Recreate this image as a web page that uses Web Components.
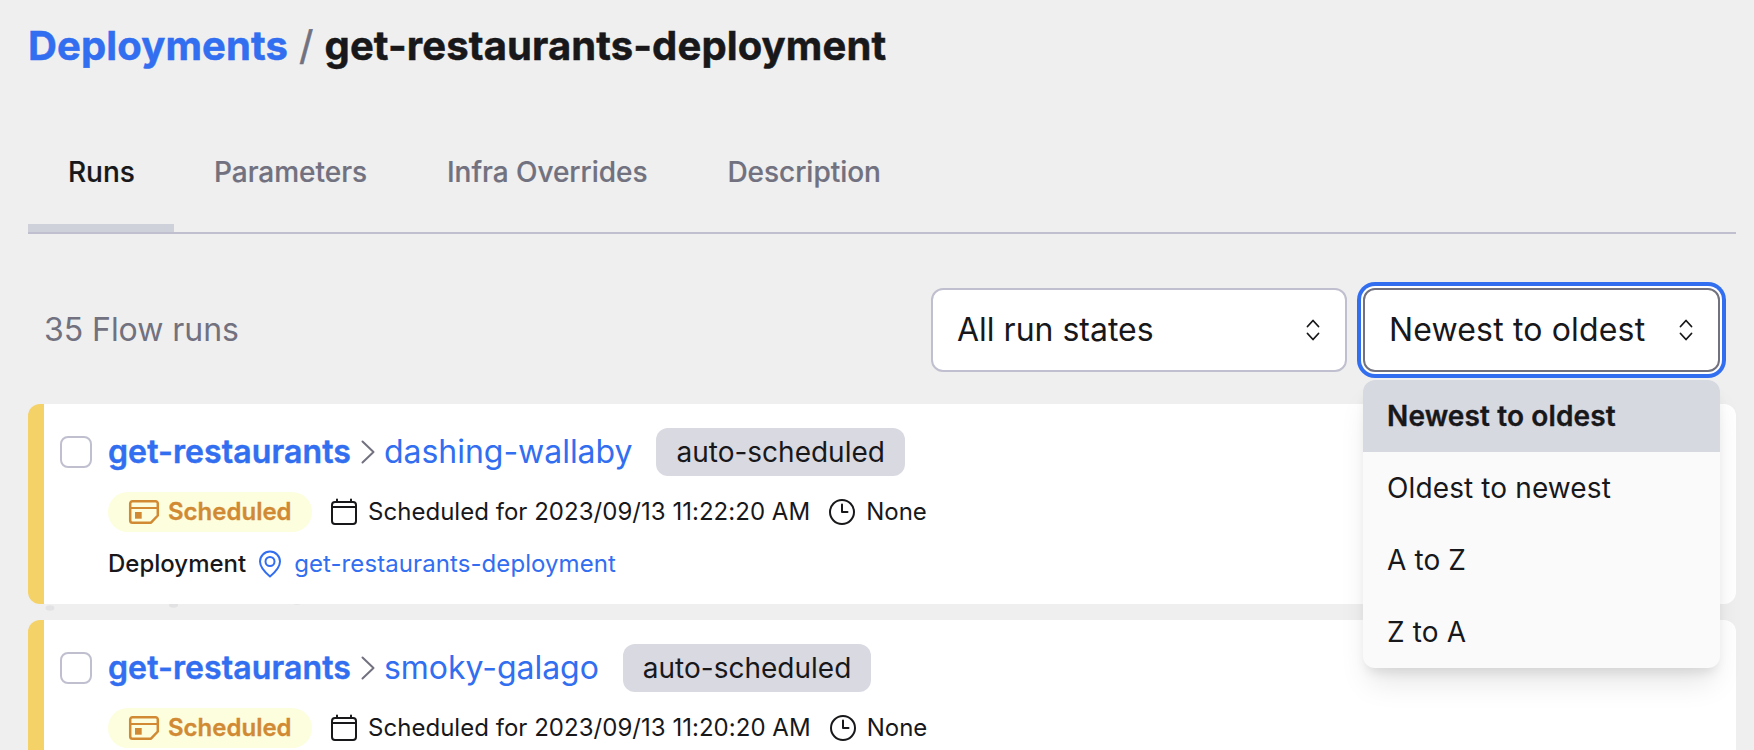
<!DOCTYPE html>
<html lang="en">
<head>
<meta charset="utf-8">
<title>get-restaurants-deployment</title>
<style>
html,body{margin:0;height:100%;overflow:hidden;background:#efefef}
body{font-family:Inter,"Liberation Sans",sans-serif;color:#18181b}
</style>
</head>
<body>
<deployment-page></deployment-page>
<script>
const define = (name, html) => customElements.define(name, class extends HTMLElement {
  connectedCallback() {
    if (this.shadowRoot) return;
    const root = this.attachShadow({mode: 'open'});
    const t = document.createElement('template');
    t.innerHTML = html;
    root.append(t.content.cloneNode(true));
  }
});

define('page-heading', `<style>
:host{display:flex;align-items:center;height:56px;font-size:40px;line-height:56px;font-weight:700;white-space:pre;letter-spacing:.12px}
span{-webkit-text-stroke:.5px currentColor}
.c{color:#326ef0}.s{color:#71717f;font-weight:400;margin:0 11px 0 11px}
</style><span class="c"><slot name="parent"></slot></span><span class="s">/</span><span><slot></slot></span>`);

define('tab-item', `<style>
:host{display:block;box-sizing:border-box;height:120px;padding:40px 40px 0;font-size:28px;line-height:40px;font-weight:500;letter-spacing:-.03px;color:#71717f;white-space:nowrap;border-bottom:8px solid transparent;-webkit-text-stroke:.2px currentColor}
:host([active]){color:#18181b;border-color:#ced1da;width:146px}
</style><slot></slot>`);

define('tab-bar', `<style>
:host{display:flex;border-bottom:2px solid #c0bfcf}
</style><slot></slot>`);

define('select-box', `<style>
:host{display:block;position:relative}
.b{box-sizing:border-box;height:84px;border:2px solid #c0bfcf;border-radius:12px;background:#fff;padding:0 25px 0 24px;display:flex;align-items:center;justify-content:space-between;font-size:32px;white-space:nowrap}
.b span{padding-bottom:2px}
:host([open]) .b{border-color:#71717f;box-shadow:0 0 0 2px #fff,0 0 0 6px #326ef0;letter-spacing:.16px}
svg{display:block;fill:none;stroke:#18181b;stroke-width:1.8;stroke-linecap:round;stroke-linejoin:round}
</style><div class="b"><span><slot></slot></span><svg width="14" height="22"><path d="M1.5 7.5 7 1.5l5.5 6M1.5 14.5l5.5 6 5.5-6"/></svg></div><slot name="menu"></slot>`);

define('option-menu', `<style>
:host{position:absolute;z-index:5;left:0;right:0;top:92px;background:#fafafa;border-radius:12px;overflow:hidden;box-shadow:0 20px 30px -6px rgba(0,0,0,.1),0 8px 12px -4px rgba(0,0,0,.1)}
</style><slot></slot>`);

define('option-item', `<style>
:host{display:block;height:72px;line-height:72px;padding:0 24px;font-size:28px;letter-spacing:.12px;white-space:nowrap}
:host([selected]){background:#d7d9e1;font-weight:600;-webkit-text-stroke:.35px currentColor}
</style><slot></slot>`);

define('state-badge', `<style>
:host{display:flex;align-items:center;box-sizing:border-box;height:40px;width:204px;padding-left:20px;border-radius:20px;background:#fdfedd;color:#d18a33;font-size:24px;font-weight:600;gap:8px}
svg{display:block;flex:none}
span{-webkit-text-stroke:.3px currentColor;padding-bottom:2px}
</style><svg width="32" height="32" fill="none" stroke="currentColor" stroke-width="2.5" stroke-linejoin="round"><path d="M4.500 5.200H27.500a2.300 2.300 0 0 1 2.300 2.300V19.500L23 26.700H4.500A2.300 2.300 0 0 1 2.200 24.400V7.500a2.300 2.300 0 0 1 2.300-2.300Z"/><path d="M2 12H30" stroke-width="2"/><path d="M7 16h6.700v6.700H7z" fill="currentColor" stroke="none"/></svg><span><slot></slot></span>`);

define('flow-run', `<style>
:host{display:block;box-sizing:border-box;height:200px;background:#fff;border-radius:12px;border-left:16px solid #f5d268;padding:20px 16px 0;white-space:nowrap}
.g{display:grid;grid-template-columns:32px 1fr;column-gap:16px}
.cb{width:32px;height:32px;box-sizing:border-box;border:2px solid #c0bfcf;border-radius:8px;margin-top:12px}
.t{display:flex;align-items:center;height:56px;font-size:32px;color:#326ef0}
.t b{font-weight:600;letter-spacing:.1px;padding-bottom:2px;-webkit-text-stroke:.45px currentColor}
.nm{letter-spacing:-.03px;padding-bottom:2px}
.t svg{margin:0 9px 0 10px;color:#71717f}
.tag{height:48px;line-height:48px;padding:0 20px;border-radius:12px;background:#d9d9e2;color:#18181b;font-size:28px;margin-left:24px}
.r{display:flex;align-items:center;height:40px;margin-top:12px;font-size:24px}
svg{display:block;flex:none;fill:none;stroke:currentColor;stroke-width:2;stroke-linecap:round;stroke-linejoin:round}
.cal,.clk{margin:0 10px 0 18px}
.tm{letter-spacing:.03px}
.l{color:#326ef0;letter-spacing:.08px}.pin{color:#326ef0;margin:0 12px}
b.d{font-weight:500}
.r>span,.d{padding-bottom:2px}
:host([compact]) .dep{display:none}
</style><div class="g"><div class="cb"></div><div>
<div class="t"><b><slot name="flow"></slot></b><svg width="14" height="24"><path d="M1.500 1.500 12.500 12 1.500 22.500"/></svg><span class="nm"><slot name="name"></slot></span><span class="tag">auto-scheduled</span></div>
<div class="r"><state-badge>Scheduled</state-badge><svg class="cal" width="28" height="28"><path d="M5 4H23a3 3 0 0 1 3 3V23a3 3 0 0 1-3 3H5a3 3 0 0 1-3-3V7a3 3 0 0 1 3-3ZM2 9H26M7 1.500V4M21 1.500V4"/></svg><span class="tm"><slot name="time"></slot></span><svg class="clk" width="28" height="28"><circle cx="14" cy="14" r="12"/><path d="M14 6.500V14H19.500"/></svg><span>None</span></div>
<div class="r dep"><b class="d">Deployment</b><svg class="pin" width="24" height="28"><path d="M12 26.500C9 24 2 17.500 2 11.500a10 10 0 0 1 20 0C22 17.500 15 24 12 26.500Z"/><circle cx="12" cy="11.500" r="4.500"/></svg><span class="l"><slot name="deployment"></slot></span></div>
</div></div>`);

define('deployment-page', `<style>
:host{display:block;box-sizing:border-box;height:750px;overflow:hidden;padding:18px 18px 0 28px}
tab-bar{margin-top:38px}
.f{display:grid;grid-template-columns:1fr 416px 357px;column-gap:16px;align-items:center;margin:54px 16px 0 16px}
.n{font-size:32px;color:#71717f;padding-bottom:2px;letter-spacing:-.05px}
.list{display:grid;row-gap:16px;margin-top:32px;position:relative}
.dots{position:absolute;left:16px;top:200px;display:block}
</style>
<page-heading><span slot="parent">Deployments</span>get-restaurants-deployment</page-heading>
<tab-bar><tab-item active>Runs</tab-item><tab-item>Parameters</tab-item><tab-item>Infra Overrides</tab-item><tab-item>Description</tab-item></tab-bar>
<div class="f"><span class="n">35 Flow runs</span>
<select-box>All run states</select-box>
<select-box open>Newest to oldest<option-menu slot="menu"><option-item selected>Newest to oldest</option-item><option-item>Oldest to newest</option-item><option-item>A to Z</option-item><option-item>Z to A</option-item></option-menu></select-box></div>
<div class="list">
<flow-run><span slot="flow">get-restaurants</span><span slot="name">dashing-wallaby</span><span slot="time">Scheduled for 2023/09/13 11:22:20 AM</span><span slot="deployment">get-restaurants-deployment</span></flow-run>
<flow-run compact><span slot="flow">get-restaurants</span><span slot="name">smoky-galago</span><span slot="time">Scheduled for 2023/09/13 11:20:20 AM</span></flow-run>
<svg class="dots" width="270" height="8" fill="#e2e2e4"><ellipse cx="6" cy="4" rx="4.500" ry="2.800"/><ellipse cx="129.500" cy="1" rx="4.500" ry="2.800"/><ellipse cx="253" cy="-2" rx="4.500" ry="2.800"/></svg>
</div>`);
</script>
</body>
</html>
